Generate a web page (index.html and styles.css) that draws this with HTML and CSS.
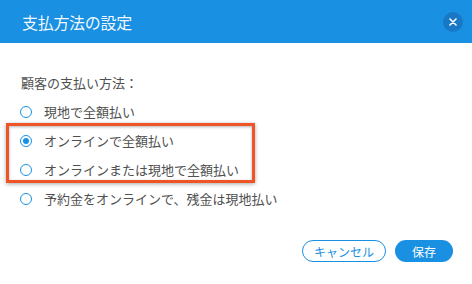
FILE: index.html
```html
<!DOCTYPE html>
<html lang="ja">
<head>
    <meta charset="UTF-8">
    <meta name="viewport" content="width=device-width, initial-scale=1.0">
    <title>支払方法の設定</title>
    <link rel="stylesheet" href="styles.css">
</head>
<body>
    <div class="dialog">
        <div class="dialog-header">
            <h1 class="dialog-title">支払方法の設定</h1>
            <button class="close-btn" aria-label="閉じる">
                <svg width="8" height="8" viewBox="0 0 8 8">
                    <path d="M1 1 L7 7 M7 1 L1 7" stroke="#fff" stroke-width="1.6" stroke-linecap="round"/>
                </svg>
            </button>
        </div>

        <div class="dialog-body">
            <div class="field-label">顧客の支払い方法：</div>

            <label class="option">
                <span class="radio"></span>
                <span>現地で全額払い</span>
            </label>

            <!-- 注目箇所 -->
            <div class="highlight">
                <label class="option">
                    <span class="radio checked"></span>
                    <span>オンラインで全額払い</span>
                </label>
                <label class="option">
                    <span class="radio"></span>
                    <span>オンラインまたは現地で全額払い</span>
                </label>
            </div>

            <label class="option">
                <span class="radio"></span>
                <span>予約金をオンラインで、残金は現地払い</span>
            </label>
        </div>

        <div class="dialog-footer">
            <button class="btn btn-outline">キャンセル</button>
            <button class="btn btn-primary">保存</button>
        </div>
    </div>
</body>
</html>
```

FILE: styles.css
```css
:root {
    --primary: #1a90e3;
    --text: #505050;
    --mark: #ef5426;
}

body {
    margin: 0;
    background: #fff;
    font-family: "Noto Sans CJK JP", "Noto Sans", sans-serif;
    color: var(--text);
}

.dialog {
    width: 472px;
    height: 284px;
    background: #fff;
}

.dialog-header {
    height: 43px;
    background: var(--primary);
    display: flex;
    align-items: center;
    justify-content: space-between;
    padding: 0 9px 0 22px;
}

.dialog-title {
    margin: 0;
    font-size: 16px;
    font-weight: 400;
    color: rgba(255, 255, 255, 0.95);
    letter-spacing: -0.3px;
}

.close-btn {
    width: 20px;
    height: 20px;
    border: none;
    border-radius: 50%;
    background: #1878c6;
    padding: 0;
    display: flex;
    align-items: center;
    justify-content: center;
    cursor: pointer;
}

.dialog-body {
    padding: 25px 20px 0 20px;
    font-size: 13px;
}

.field-label {
    line-height: 29px;
    padding-left: 1px;
}

.option {
    display: flex;
    align-items: center;
    gap: 12px;
    height: 29px;
    cursor: pointer;
}

.radio {
    width: 12px;
    height: 12px;
    box-sizing: border-box;
    border: 1px solid var(--primary);
    border-radius: 50%;
    display: flex;
    align-items: center;
    justify-content: center;
    flex-shrink: 0;
}

.radio.checked::after {
    content: "";
    width: 6px;
    height: 6px;
    border-radius: 50%;
    background: var(--primary);
}

.highlight {
    position: relative;
}

.highlight::before {
    content: "";
    position: absolute;
    top: -3px;
    left: -14px;
    width: 249px;
    height: 60px;
    box-sizing: border-box;
    border: 3px solid var(--mark);
    box-shadow: 0 1px 4px rgba(0, 0, 0, 0.35), inset 0 1px 3px rgba(0, 0, 0, 0.3);
    pointer-events: none;
}

.dialog-footer {
    display: flex;
    justify-content: flex-end;
    gap: 9px;
    padding: 27px 19px 0 0;
}

.btn {
    height: 22px;
    border-radius: 11px;
    font-family: inherit;
    font-size: 12px;
    padding: 0;
    cursor: pointer;
}

.btn-outline {
    width: 84px;
    background: #fff;
    border: 1px solid var(--primary);
    color: var(--primary);
}

.btn-primary {
    width: 58px;
    background: var(--primary);
    border: none;
    color: #fff;
}
```
